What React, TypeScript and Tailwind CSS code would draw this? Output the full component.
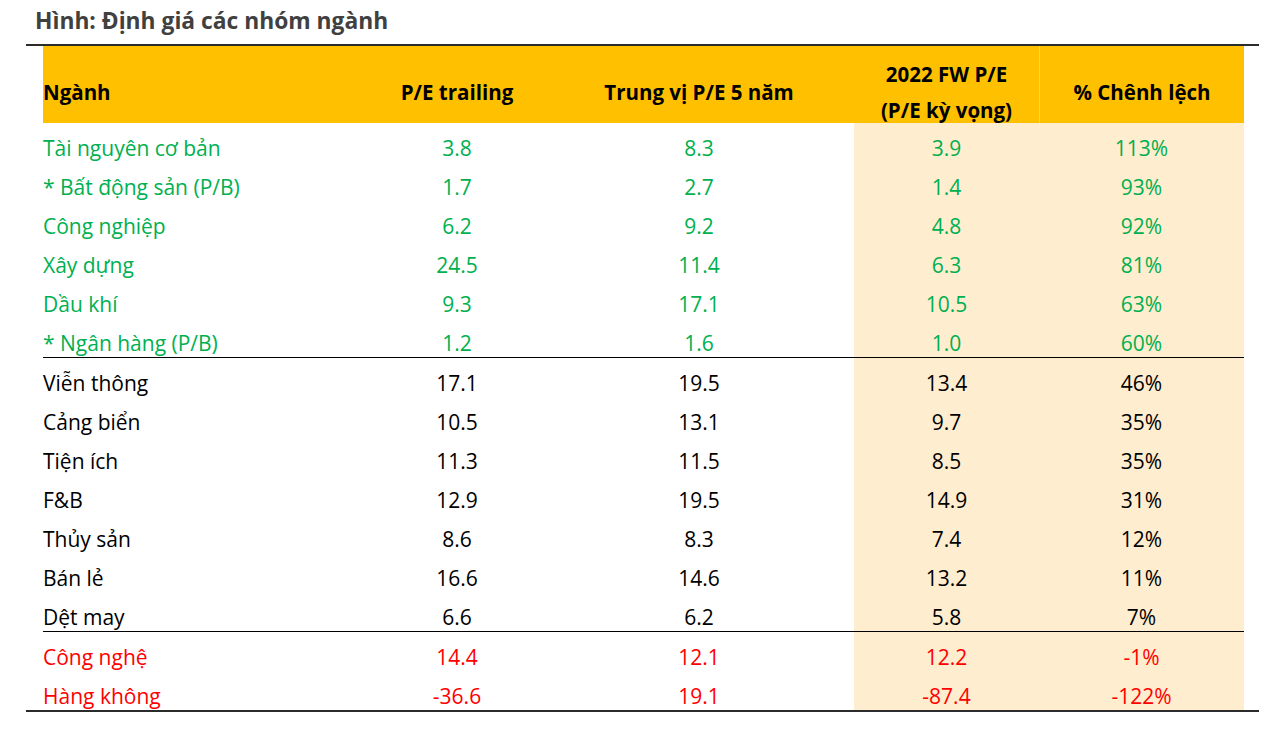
type Row = { name: string; pe: string; median: string; fw: string; diff: string };

const groups: { color: string; rows: Row[] }[] = [
  {
    color: "text-[#00B050]",
    rows: [
      { name: "Tài nguyên cơ bản", pe: "3.8", median: "8.3", fw: "3.9", diff: "113%" },
      { name: "* Bất động sản (P/B)", pe: "1.7", median: "2.7", fw: "1.4", diff: "93%" },
      { name: "Công nghiệp", pe: "6.2", median: "9.2", fw: "4.8", diff: "92%" },
      { name: "Xây dựng", pe: "24.5", median: "11.4", fw: "6.3", diff: "81%" },
      { name: "Dầu khí", pe: "9.3", median: "17.1", fw: "10.5", diff: "63%" },
      { name: "* Ngân hàng (P/B)", pe: "1.2", median: "1.6", fw: "1.0", diff: "60%" },
    ],
  },
  {
    color: "text-black",
    rows: [
      { name: "Viễn thông", pe: "17.1", median: "19.5", fw: "13.4", diff: "46%" },
      { name: "Cảng biển", pe: "10.5", median: "13.1", fw: "9.7", diff: "35%" },
      { name: "Tiện ích", pe: "11.3", median: "11.5", fw: "8.5", diff: "35%" },
      { name: "F&B", pe: "12.9", median: "19.5", fw: "14.9", diff: "31%" },
      { name: "Thủy sản", pe: "8.6", median: "8.3", fw: "7.4", diff: "12%" },
      { name: "Bán lẻ", pe: "16.6", median: "14.6", fw: "13.2", diff: "11%" },
      { name: "Dệt may", pe: "6.6", median: "6.2", fw: "5.8", diff: "7%" },
    ],
  },
  {
    color: "text-[#FF0000]",
    rows: [
      { name: "Công nghệ", pe: "14.4", median: "12.1", fw: "12.2", diff: "-1%" },
      { name: "Hàng không", pe: "-36.6", median: "19.1", fw: "-87.4", diff: "-122%" },
    ],
  },
];

const cols = "grid grid-cols-[327px_174px_310px_185px_205px]";

export default function App() {
  return (
    <div className="w-[1270px] h-[732px] bg-white font-['Open_Sans',sans-serif] text-[20.5px]">
      {/* Title */}
      <h1 className="pl-[35px] pt-[6px] leading-[30px] text-[22.8px] font-bold text-[#404040]">
        Hình: Định giá các nhóm ngành
      </h1>

      <div className="mt-[8px] ml-[26px] w-[1233px] border-t-2 border-b-2 border-[#2b2b2b]">
        <div className="ml-[17px] w-[1201px]">
          {/* Header */}
          <div className={`${cols} h-[77px] bg-[#FFC000] font-bold text-black leading-[36px]`}>
            <div className="pt-[10px] flex items-center">Ngành</div>
            <div className="pt-[10px] flex items-center justify-center">P/E trailing</div>
            <div className="pt-[10px] flex items-center justify-center">Trung vị P/E 5 năm</div>
            <div className="pt-[10px] flex flex-col items-center justify-center">
              <span>2022 FW P/E</span>
              <span>(P/E kỳ vọng)</span>
            </div>
            <div className="pt-[10px] flex items-center justify-center border-l border-[#FFD456]">% Chênh lệch</div>
          </div>

          {/* Body */}
          {groups.map((g, gi) => (
            <div key={gi} className={gi < groups.length - 1 ? "border-b border-black" : ""}>
              {g.rows.map((r) => (
                <div key={r.name} className={`${cols} h-[39px] leading-[28px] font-medium text-[21px] ${g.color}`}>
                  <div className="pt-[10px] flex items-center">{r.name}</div>
                  <div className="pt-[10px] flex items-center justify-center">{r.pe}</div>
                  <div className="pt-[10px] flex items-center justify-center">{r.median}</div>
                  <div className="pt-[10px] flex items-center justify-center bg-[#FFEDCF]">{r.fw}</div>
                  <div className="pt-[10px] flex items-center justify-center bg-[#FFEDCF]">{r.diff}</div>
                </div>
              ))}
            </div>
          ))}
        </div>
      </div>
    </div>
  );
}
